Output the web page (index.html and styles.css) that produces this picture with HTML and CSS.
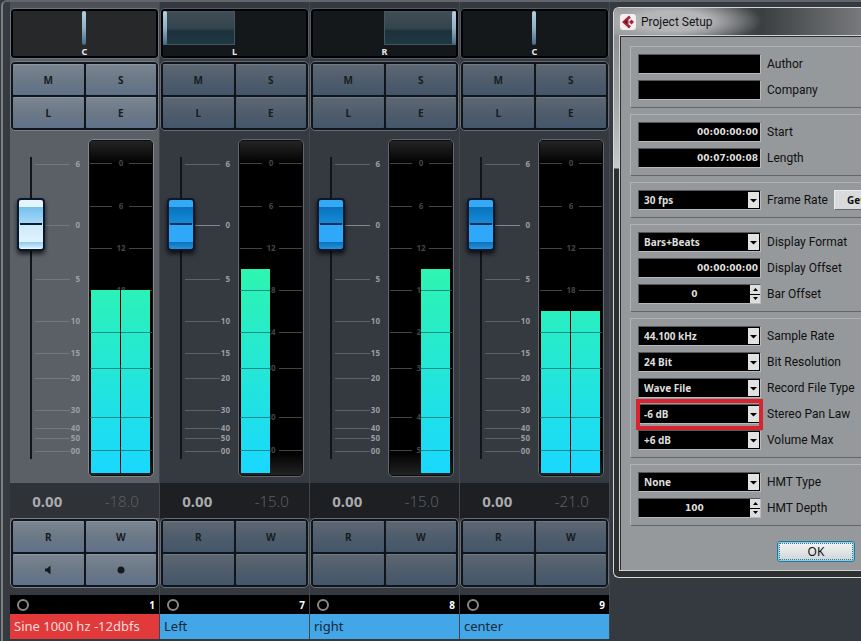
FILE: index.html
```html
<!DOCTYPE html>
<html lang="en">
<head>
    <meta charset="UTF-8">
    <meta name="viewport" content="width=device-width, initial-scale=1.0">
    <title>Mixer - Project Setup</title>
    <link rel="stylesheet" href="styles.css">
</head>
<body>
    <div class="workspace">
        <main class="mixer" id="mixer"></main>

        <section class="dialog" aria-label="Project Setup">
            <header class="dialog-title">
                <svg class="logo" viewBox="0 0 16 16" aria-hidden="true">
                    <rect width="16" height="16" rx="3" fill="#f4eeee"/>
                    <path d="M9 1.500 2 8l7 6.500 2-2.500-2.500-1.500v-5L11 4z" fill="#a3263c"/>
                    <path d="M7 6 4.500 8 7 10z" fill="#5c1524"/>
                    <path d="m11.500 5.500 2.500 2.500-2.500 2.500L9 8z" fill="#a3263c"/>
                </svg>
                <h1>Project Setup</h1>
            </header>
            <form class="dialog-body" onsubmit="return false">
                <div class="group">
                    <div class="row">
                        <input class="field" type="text" id="author">
                        <label for="author">Author</label>
                    </div>
                    <div class="row">
                        <input class="field" type="text" id="company">
                        <label for="company">Company</label>
                    </div>
                </div>

                <div class="group">
                    <div class="row">
                        <input class="field time" type="text" id="start" value="00:00:00:00">
                        <label for="start">Start</label>
                    </div>
                    <div class="row">
                        <input class="field time" type="text" id="length" value="00:07:00:08">
                        <label for="length">Length</label>
                    </div>
                </div>

                <div class="group">
                    <div class="row">
                        <select class="field" id="frameRate"><option>30 fps</option></select>
                        <label for="frameRate">Frame Rate</label>
                        <button type="button" class="get-btn">Get</button>
                    </div>
                </div>

                <div class="group">
                    <div class="row">
                        <select class="field" id="displayFormat"><option>Bars+Beats</option></select>
                        <label for="displayFormat">Display Format</label>
                    </div>
                    <div class="row">
                        <input class="field time" type="text" id="displayOffset" value="00:00:00:00">
                        <label for="displayOffset">Display Offset</label>
                    </div>
                    <div class="row">
                        <div class="field spinner">
                            <input type="text" id="barOffset" value="0">
                            <div class="steps">
                                <button type="button" aria-label="Increase bar offset"><svg viewBox="0 0 5 3"><path d="M0 3h5L2.500 0z"/></svg></button>
                                <button type="button" aria-label="Decrease bar offset"><svg viewBox="0 0 5 3"><path d="M0 0h5L2.500 3z"/></svg></button>
                            </div>
                        </div>
                        <label for="barOffset">Bar Offset</label>
                    </div>
                </div>

                <div class="group">
                    <div class="row">
                        <select class="field" id="sampleRate"><option>44.100 kHz</option></select>
                        <label for="sampleRate">Sample Rate</label>
                    </div>
                    <div class="row">
                        <select class="field" id="bitResolution"><option>24 Bit</option></select>
                        <label for="bitResolution">Bit Resolution</label>
                    </div>
                    <div class="row">
                        <select class="field" id="fileType"><option>Wave File</option></select>
                        <label for="fileType">Record File Type</label>
                    </div>
                    <div class="row marked">
                        <select class="field" id="panLaw"><option>-6 dB</option></select>
                        <label for="panLaw">Stereo Pan Law</label>
                    </div>
                    <div class="row">
                        <select class="field" id="volumeMax"><option>+6 dB</option></select>
                        <label for="volumeMax">Volume Max</label>
                    </div>
                </div>

                <div class="group">
                    <div class="row">
                        <select class="field" id="hmtType"><option>None</option></select>
                        <label for="hmtType">HMT Type</label>
                    </div>
                    <div class="row">
                        <div class="field spinner">
                            <input type="text" id="hmtDepth" value="100">
                            <div class="steps">
                                <button type="button" aria-label="Increase HMT depth"><svg viewBox="0 0 5 3"><path d="M0 3h5L2.500 0z"/></svg></button>
                                <button type="button" aria-label="Decrease HMT depth"><svg viewBox="0 0 5 3"><path d="M0 0h5L2.500 3z"/></svg></button>
                            </div>
                        </div>
                        <label for="hmtDepth">HMT Depth</label>
                    </div>
                </div>

                <div class="actions">
                    <button type="submit" class="ok-btn">OK</button>
                </div>
            </form>
        </section>
    </div>

    <script src="script.js"></script>
</body>
</html>
```
FILE: styles.css
```css
*,
*::before {
    box-sizing: border-box;
}
body {
    margin: 0;
    background: #353940;
    font-family: "Noto Sans", "Open Sans", sans-serif;
    overflow: hidden;
}
button,
input,
select {
    font-family: inherit;
    margin: 0;
}
.workspace {
    display: flex;
    align-items: flex-start;
    gap: 3px;
    min-height: 100vh;
    margin-left: 1px;
    border-top: 2px solid #62666b;
    border-left: 2px solid #7c7f82;
    border-top-left-radius: 6px;
}

/* Mixer */
.mixer {
    display: flex;
    flex: none;
    padding-left: 7px;
}
.strip {
    width: 150px;
    padding-top: 6px;
    border-right: 1px solid #44484e;
}
.strip.selected {
    background: linear-gradient(#4c5056, #5b5f66 60px, #5b5f66 530px, #353940 586px);
}
.pan {
    position: relative;
    height: 51px;
    border: 1px solid #555a60;
    border-radius: 4px;
    background: #14181b;
    box-shadow: inset 0 0 0 2px #000207;
}
.selected .pan {
    border-color: #70757a;
    background: #262829;
}
.pan-fill {
    position: absolute;
    top: 2px;
    width: 72px;
    height: 34px;
    border: 1px solid #44565f;
    background: linear-gradient(#3f4d55, #34454e 50%, #1c313c 60%, #203844);
}
.pan-l .pan-fill {
    left: 2px;
}
.pan-r .pan-fill {
    right: 2px;
}
.pan-c .pan-fill {
    display: none;
}
.pan-handle {
    position: absolute;
    top: 2px;
    left: 71px;
    width: 4px;
    height: 34px;
    border-radius: 2px;
    background: linear-gradient(#b9d0e0, #8fb0c5 50%, #456b80);
}
.pan-l .pan-handle {
    left: 2px;
}
.pan-r .pan-handle {
    left: 141px;
}
.pan-label {
    position: absolute;
    bottom: 0;
    width: 100%;
    color: #e8e8e8;
    font: bold 9px/12px "Noto Sans", sans-serif;
    text-align: center;
}
.pads {
    display: grid;
    grid-template-columns: 1fr 1fr;
    grid-auto-rows: 31px;
    gap: 2px;
    padding: 2px;
    border: 1px solid #686d73;
    border-radius: 5px;
    background: #10151c;
}
.pads-top {
    margin-top: 2px;
}
.pads button {
    display: flex;
    align-items: center;
    justify-content: center;
    padding: 0;
    border: 0;
    border-top: 1px solid #6f7a86;
    border-radius: 1px;
    background: linear-gradient(#5d6773, #4f5d6c 50%, #44566b);
    color: #171c20;
    font: bold 10px/12px "Noto Sans", sans-serif;
}
.selected .pads {
    border-color: #7b8086;
}
.selected .pads button {
    border-top-color: #8b96a1;
    background: linear-gradient(#7a8591, #6b7886 50%, #60728a);
}
.pads svg {
    width: 10px;
    height: 10px;
    fill: #14191e;
}
.levels {
    display: flex;
    height: 352px;
    padding-top: 8px;
}
.fader {
    position: relative;
    width: 78px;
}
.fader-scale {
    display: block;
    width: 78px;
    height: 334px;
    fill: #9a9da1;
    font: bold 8px "Noto Sans", sans-serif;
}
.fader-scale line {
    stroke: #5d6268;
}
.fader-scale .zero {
    stroke: #85898d;
}
.selected .fader-scale {
    fill: #9da0a5;
}
.selected .fader-scale line {
    stroke: #74787e;
}
.fader input {
    position: absolute;
    top: 18px;
    left: 7px;
    width: 28px;
    height: 302px;
    appearance: none;
    background: linear-gradient(#121417, #121417) center / 2px 100% no-repeat;
    writing-mode: vertical-lr;
    direction: rtl;
}
.fader input::-webkit-slider-thumb {
    appearance: none;
    width: 28px;
    height: 53px;
    border: 2px solid #08182c;
    border-radius: 4px;
    background: linear-gradient(#0c2d50, #0c2d50) center / 22px 2px no-repeat,
        linear-gradient(#35a9f5 7px, #0872ba 7px, #158ada 23px, #2fa8fa 25px, #2fa8fa 42px, #0b70ba 42px, #2592df);
    box-shadow: 0 3px 4px rgba(0, 0, 0, 0.7);
}
.selected .fader input::-webkit-slider-thumb {
    background: linear-gradient(#101c28, #101c28) center / 22px 2px no-repeat,
        linear-gradient(#e4f4fd 7px, #74c0ec 7px, #a5d8f8 23px, #cbeafc 25px, #e2f3fc 42px, #8bcaf0 42px, #c4e6f9 47px, #fff);
}
.meter {
    height: 338px;
    padding: 1px;
    border: 1px solid #62666b;
    border-radius: 5px;
    background: #0a0d11;
}
.selected .meter {
    border-color: #85898c;
}
.meter svg {
    display: block;
    width: 62px;
    height: 334px;
    fill: #444;
    font: bold 8px "Noto Sans", sans-serif;
}
.readout {
    display: flex;
    height: 35px;
    background: #1d1f22;
    text-align: center;
    line-height: 36px;
}
.selected .readout {
    background: #2f3236;
}
.readout span {
    flex: 1;
}
.readout .gain {
    color: #a9abad;
    font-size: 15px;
    font-weight: bold;
}
.readout .peak {
    color: #5c5f62;
    font-size: 15px;
    font-weight: 300;
}
.channel-id {
    display: flex;
    align-items: center;
    justify-content: space-between;
    height: 19px;
    margin-top: 7px;
    padding: 0 4px 0 7px;
    background: #000;
    color: #fff;
    font: bold 10px/18px "Noto Sans", sans-serif;
}
.channel-id::before {
    content: "";
    width: 12px;
    height: 12px;
    border: 2px solid #888;
    border-radius: 50%;
}
.channel-name {
    height: 25px;
    padding-left: 4px;
    background: #43a6e6;
    color: #17293b;
    font-size: 13px;
    line-height: 24px;
    white-space: nowrap;
}
.selected .channel-name {
    background: #e23a3a;
    color: #f4dada;
}

/* Project Setup window */
.dialog {
    flex: 1;
    min-width: 0;
    margin-top: 5px;
    padding: 0 0 6px 5px;
    overflow: hidden;
    border: 1px solid #d4d6d8;
    border-right: 0;
    border-radius: 6px 0 0 6px;
    background: linear-gradient(#85888b, #a2a4a6 90px, #c8c9ca 160px, #2d2f31 161px);
}
.dialog-title {
    display: flex;
    align-items: center;
    gap: 5px;
    height: 27px;
    margin-left: -5px;
    padding-left: 6px;
    background: radial-gradient(ellipse 90px 24px at 58px 13px, #b5b6b8 40%, transparent),
        linear-gradient(90deg, #909395, #4a4d51 45%, #3c3f42 60%, #77797c);
}
.dialog-title h1 {
    margin: 0;
    color: #151515;
    font: 12px "Roboto", sans-serif;
}
.logo {
    width: 16px;
    height: 16px;
}
.dialog-body {
    padding: 10px 0 8px 10px;
    border: 1px solid #d0d2d3;
    border-right: 0;
    background: #96999c;
    box-shadow: inset 1px 1px #2c2e30;
}
.group {
    margin-bottom: 6px;
    padding: 7px 0 7px 7px;
    border: 1px solid #b1b4b6;
    border-right: 0;
    border-bottom-color: #64676a;
}
.row {
    position: relative;
    display: flex;
    align-items: center;
    gap: 6px;
    height: 20px;
}
.row + .row {
    margin-top: 6px;
}
.row label {
    color: #101010;
    font: 12px/20px "Roboto", sans-serif;
    white-space: nowrap;
}
.field {
    flex: none;
    width: 123px;
    height: 20px;
    padding: 0 5px;
    border: 1px solid #55585a;
    border-right-color: #b8babc;
    border-bottom-color: #b8babc;
    border-radius: 0;
    background: #000;
    color: #dedede;
    font-size: 10px;
    font-weight: bold;
}
.time {
    padding: 0 2px;
    font-family: "DejaVu Sans", sans-serif;
    font-size: 9px;
    text-align: right;
}
select.field {
    appearance: none;
    background: #000 url("data:image/svg+xml,%3Csvg xmlns='http://www.w3.org/2000/svg' width='11' height='16'%3E%3Cpath fill='%23e2e2e2' d='M0 0h11v16H0z'/%3E%3Cpath d='M2 7h7l-3.500 3.500z'/%3E%3C/svg%3E") right 1px center no-repeat;
}
.spinner {
    display: flex;
    padding: 0;
}
.spinner input {
    flex: 1;
    min-width: 0;
    padding: 0;
    border: 0;
    background: none;
    color: inherit;
    font: bold 9px "DejaVu Sans", sans-serif;
    text-align: center;
}
.steps {
    display: flex;
    flex-direction: column;
    gap: 1px;
    width: 10px;
}
.steps button {
    display: flex;
    flex: 1;
    align-items: center;
    justify-content: center;
    min-height: 0;
    padding: 0;
    border: 0;
    background: #dedede;
}
.steps svg {
    width: 5px;
    height: 3px;
}
.marked::before {
    content: "";
    position: absolute;
    top: -5px;
    left: -2px;
    width: 127px;
    height: 31px;
    border: 4px solid #d9232e;
    pointer-events: none;
}
.get-btn {
    flex: none;
    height: 20px;
    padding: 0 12px;
    border: 1px solid #eee;
    border-right-color: #66696b;
    border-bottom-color: #66696b;
    background: #d8dadb;
    color: #111;
    font-size: 10px;
    font-weight: bold;
}
.actions {
    display: flex;
    justify-content: flex-end;
    padding: 9px 6px 0 0;
}
.ok-btn {
    width: 78px;
    height: 21px;
    padding: 0;
    border: 1px solid #2d7897;
    border-radius: 3px;
    outline: 1px dotted #287a9e;
    outline-offset: -3px;
    background: linear-gradient(#f4f5f5, #e2e5e6 50%, #cdd3d6);
    box-shadow: inset 0 0 0 1px #7fcdea;
    color: #111;
    font-size: 12px;
}
```
FILE: script.js
```javascript
const channels = [
    { id: 1, name: 'Sine 1000 hz -12dbfs', pan: 'C', peak: '-18.0', left: 290, right: 290, selected: true },
    { id: 7, name: 'Left', pan: 'L', peak: '-15.0', left: 269 },
    { id: 8, name: 'right', pan: 'R', peak: '-15.0', right: 269 },
    { id: 9, name: 'center', pan: 'C', peak: '-21.0', left: 311, right: 311 }
];

// [label, y] pairs, y counted from the top of the window
const faderMarks = [['6', 164], ['0', 225], ['5', 279], ['10', 321], ['15', 353], ['20', 378], ['30', 410], ['40', 428], ['50', 438], ['00', 451]];
const meterMarks = [['0', 163], ['6', 206], ['12', 248], ['18', 290], ['24', 332], ['30', 368], ['40', 417], ['50', 450]];
const FADER_TOP = 139;
const TOP = 141;
const BOTTOM = 473;

function faderScale() {
    return faderMarks.map(([label, y]) => {
        const start = label === '0' ? 35 : 25;
        const top = y - FADER_TOP;
        return `<line class="${label === '0' ? 'zero' : ''}" x1="${start}" x2="60" y1="${top + 0.5}" y2="${top + 0.5}"/>
            <text x="70" y="${top + 3}" text-anchor="end">${label}</text>`;
    }).join('');
}

function bar(x, level) {
    if (!level) return '';
    const lines = meterMarks
        .filter(([, y]) => y > level)
        .map(([, y]) => `<path d="M${x} ${y - TOP + 0.5}h29" stroke="#128b8d"/>`)
        .join('');
    return `<rect x="${x}" y="${level - TOP}" width="29" height="${BOTTOM - level}" fill="url(#level)"/>${lines}`;
}

function meter(ch) {
    const marks = meterMarks.map(([label, y]) => `
        <path d="M0 ${y - TOP + 0.5}h22m17 0h23" stroke="#444"/>
        <text x="31" y="${y - TOP + 3}" text-anchor="middle">${label}</text>`).join('');
    return `<svg viewBox="0 0 62 334" role="img" aria-label="Level ${ch.peak} dB">
        <defs>
            <linearGradient id="level" gradientUnits="userSpaceOnUse" x1="0" y1="128" x2="0" y2="332">
                <stop offset="0" stop-color="#2df5b0"/>
                <stop offset="1" stop-color="#19d8ff"/>
            </linearGradient>
            <linearGradient id="glass" x1="0" y1="0" x2="0" y2="1">
                <stop offset="0" stop-color="#242424"/>
                <stop offset="0.07" stop-color="#000"/>
                <stop offset="0.93" stop-color="#000"/>
                <stop offset="1" stop-color="#222"/>
            </linearGradient>
        </defs>
        <rect width="62" height="334" fill="url(#glass)"/>
        ${marks}
        ${bar(1, ch.left)}
        ${bar(31, ch.right)}
    </svg>`;
}

function strip(ch) {
    const speaker = ch.selected ? '<svg viewBox="0 0 10 10"><path d="M2 3.500h2L7.500 0.500v9L4 6.500H2z"/></svg>' : '';
    const record = ch.selected ? '<svg viewBox="0 0 10 10"><circle cx="5" cy="5" r="3.500"/></svg>' : '';
    return `<section class="strip ${ch.selected ? 'selected' : ''}" aria-label="${ch.name}">
        <div class="pan pan-${ch.pan.toLowerCase()}">
            <div class="pan-fill"></div>
            <div class="pan-handle"></div>
            <div class="pan-label">${ch.pan}</div>
        </div>
        <div class="pads pads-top">
            <button>M</button><button>S</button>
            <button>L</button><button>E</button>
        </div>
        <div class="levels">
            <div class="fader">
                <svg class="fader-scale" viewBox="0 0 78 334">${faderScale()}</svg>
                <input type="range" min="0" max="1000" value="837" aria-label="${ch.name} volume">
            </div>
            <div class="meter">${meter(ch)}</div>
        </div>
        <div class="readout">
            <span class="gain">0.00</span>
            <span class="peak">${ch.peak}</span>
        </div>
        <div class="pads">
            <button>R</button><button>W</button>
            <button aria-label="Monitor">${speaker}</button><button aria-label="Record">${record}</button>
        </div>
        <div class="channel-id">${ch.id}</div>
        <div class="channel-name">${ch.name}</div>
    </section>`;
}

document.getElementById('mixer').innerHTML = channels.map(strip).join('');
```
